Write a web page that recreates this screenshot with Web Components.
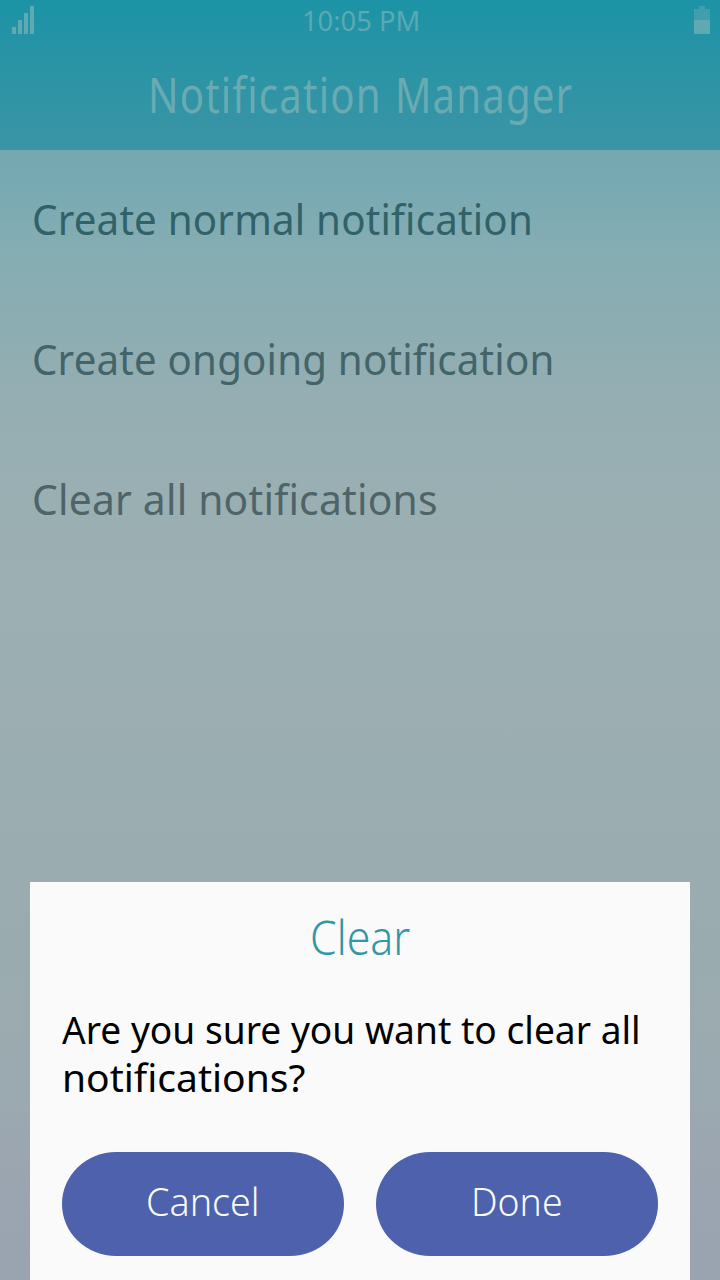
<!DOCTYPE html>
<html lang="en"><head><meta charset="utf-8"><title>Notification Manager</title>
<style>html,body{margin:0;height:1280px;overflow:hidden;font-family:"Noto Sans","Open Sans",sans-serif;font-variant-ligatures:none}</style></head>
<body><app-screen></app-screen>
<script>
function define(name, html, ready) {
  const t = document.createElement('template'); t.innerHTML = html;
  customElements.define(name, class extends HTMLElement {
    connectedCallback() {
      if (this.shadowRoot) return;
      this.attachShadow({mode: 'open'}).append(t.content.cloneNode(true));
      if (ready) ready(this);
    }
  });
}
// A single line of text, condensed or widened to its "width" attribute.
define('fit-text', `<style>:host{display:block;white-space:nowrap;flex:none}span{display:inline-block;transform-origin:0 50%}</style><span><slot></slot></span>`, el => {
  const s = el.shadowRoot.querySelector('span'), w = +el.getAttribute('width');
  el.style.width = w + 'px';
  s.style.transform = `scaleX(${w / s.offsetWidth})`;
});
define('signal-icon', `<style>:host,svg{display:block}</style><svg width="22" height="28" fill="#60a9b3"><path d="M0 21h4v7H0zM6 14h4v14H6zM12 7h4v21h-4zM18 0h4v28h-4z"/></svg>`);
define('battery-icon', `<style>:host,svg{display:block}</style><svg width="16" height="28"><path fill="#419fad" d="M5 0h6v3h5v11H0V3h5z"/><path fill="#60a9b3" d="M0 14h16v14H0z"/></svg>`);
define('status-bar', `<style>:host{display:flex;justify-content:space-between;align-items:center;height:40px;padding:0 10px 0 12px;box-sizing:border-box;font-size:28px;line-height:38px;color:#5ba9b3}fit-text{margin-right:6px}</style>
<signal-icon></signal-icon><fit-text width="118">10:05 PM</fit-text><battery-icon></battery-icon>`);
define('app-header', `<style>:host{display:block;height:150px;background:linear-gradient(#1c93a6,#3b95a5)}div{display:flex;justify-content:center;font-size:48.5px;line-height:108px;color:#6aaab3;font-weight:400;letter-spacing:1.4px;word-spacing:2px}</style>
<status-bar></status-bar><div><fit-text width="425"><slot></slot></fit-text></div>`);
define('list-item', `<style>:host{display:block;height:140px;box-sizing:border-box;padding-left:32px;font-size:41px;line-height:138px;letter-spacing:.2px}</style><slot></slot>`);
define('pill-button', `<style>:host{display:block;flex:1}button{display:flex;justify-content:center;width:100%;height:104px;padding:0;border:0;border-radius:54px/52px;background:#4d61ad;color:#fafafa;font:300 39px/98px "Noto Sans","Open Sans",sans-serif}</style><button><slot></slot></button>`);
define('confirm-dialog', `<style>:host{display:flex;flex-direction:column;box-sizing:border-box;width:660px;height:398px;background:#fafafa;padding:0 32px}
header{display:flex;justify-content:center;height:123px;font-size:48px;line-height:109px;font-weight:350;color:#3197a7}
main{height:147px;font-size:39px;line-height:48px;color:#000}footer{display:flex;gap:32px}</style>
<header><slot name="title"></slot></header><main><slot></slot></main><footer><slot name="actions"></slot></footer>`);
define('app-screen', `<style>:host{display:flex;flex-direction:column;width:720px;height:1280px;background:linear-gradient(#72a6b1 120px,#77a9b2 180px,#85adb3 250px,#8cadb2 320px,#95aeb2 400px,#9aafb2 500px,#9cafb2 580px,#9aacaf 880px,#9baab0 1080px,#9ba5b0 1180px,#9aa3b0 1280px)}
confirm-dialog{margin:auto auto 0}</style>
<app-header>Notification Manager</app-header>
<list-item style="color:#306268"><fit-text width="501">Create normal notification</fit-text></list-item>
<list-item style="color:#436469"><fit-text width="523">Create ongoing notification</fit-text></list-item>
<list-item style="color:#4f6468"><fit-text width="406">Clear all notifications</fit-text></list-item>
<confirm-dialog><fit-text slot="title" width="100">Clear</fit-text>
<fit-text width="579">Are you sure you want to clear all</fit-text><fit-text width="243">notifications?</fit-text>
<pill-button slot="actions"><fit-text width="114">Cancel</fit-text></pill-button><pill-button slot="actions"><fit-text width="92">Done</fit-text></pill-button></confirm-dialog>`);
</script></body></html>
